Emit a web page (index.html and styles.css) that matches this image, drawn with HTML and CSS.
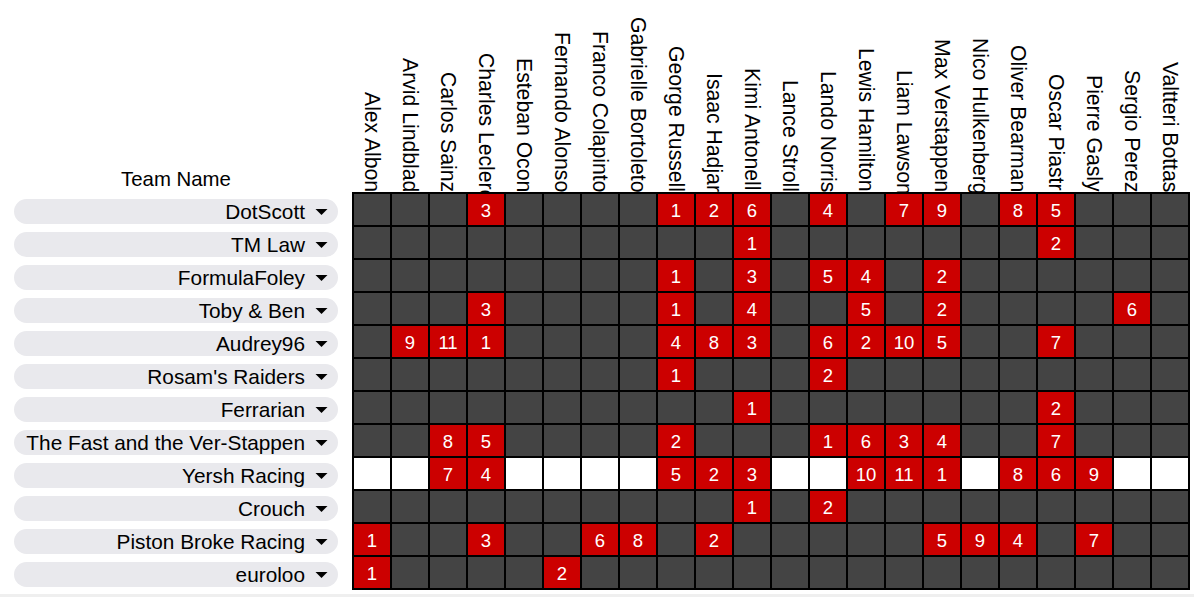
FILE: index.html
```html
<!DOCTYPE html>
<html lang="en">
<head>
<meta charset="utf-8">
<title>Team picks</title>
<link rel="stylesheet" href="styles.css">
</head>
<body>
<div class="page">
  <div class="side">
    <div class="side-head"><span>Team Name</span></div>
    <div class="teams">
      <div class="team"><span class="name">DotScott</span><svg class="caret" viewBox="0 0 12 6"><path d="M0 0H12L6 6Z"/></svg></div>
      <div class="team"><span class="name">TM Law</span><svg class="caret" viewBox="0 0 12 6"><path d="M0 0H12L6 6Z"/></svg></div>
      <div class="team"><span class="name">FormulaFoley</span><svg class="caret" viewBox="0 0 12 6"><path d="M0 0H12L6 6Z"/></svg></div>
      <div class="team"><span class="name">Toby &amp; Ben</span><svg class="caret" viewBox="0 0 12 6"><path d="M0 0H12L6 6Z"/></svg></div>
      <div class="team"><span class="name">Audrey96</span><svg class="caret" viewBox="0 0 12 6"><path d="M0 0H12L6 6Z"/></svg></div>
      <div class="team"><span class="name">Rosam's Raiders</span><svg class="caret" viewBox="0 0 12 6"><path d="M0 0H12L6 6Z"/></svg></div>
      <div class="team"><span class="name">Ferrarian</span><svg class="caret" viewBox="0 0 12 6"><path d="M0 0H12L6 6Z"/></svg></div>
      <div class="team"><span class="name">The Fast and the Ver-Stappen</span><svg class="caret" viewBox="0 0 12 6"><path d="M0 0H12L6 6Z"/></svg></div>
      <div class="team"><span class="name">Yersh Racing</span><svg class="caret" viewBox="0 0 12 6"><path d="M0 0H12L6 6Z"/></svg></div>
      <div class="team"><span class="name">Crouch</span><svg class="caret" viewBox="0 0 12 6"><path d="M0 0H12L6 6Z"/></svg></div>
      <div class="team"><span class="name">Piston Broke Racing</span><svg class="caret" viewBox="0 0 12 6"><path d="M0 0H12L6 6Z"/></svg></div>
      <div class="team"><span class="name">euroloo</span><svg class="caret" viewBox="0 0 12 6"><path d="M0 0H12L6 6Z"/></svg></div>
    </div>
  </div>
  <div class="board">
    <div class="heads">
      <div class="head"><span class="label">Alex Albon</span></div>
      <div class="head"><span class="label">Arvid Lindblad</span></div>
      <div class="head"><span class="label">Carlos Sainz</span></div>
      <div class="head"><span class="label sunk">Charles Leclerc</span></div>
      <div class="head"><span class="label">Esteban Ocon</span></div>
      <div class="head"><span class="label">Fernando Alonso</span></div>
      <div class="head"><span class="label">Franco Colapinto</span></div>
      <div class="head"><span class="label">Gabrielle Bortoleto</span></div>
      <div class="head"><span class="label">George Russell</span></div>
      <div class="head"><span class="label">Isaac Hadjar</span></div>
      <div class="head"><span class="label dip">Kimi Antonelli</span></div>
      <div class="head"><span class="label">Lance Stroll</span></div>
      <div class="head"><span class="label">Lando Norris</span></div>
      <div class="head"><span class="label">Lewis Hamilton</span></div>
      <div class="head"><span class="label dip">Liam Lawson</span></div>
      <div class="head"><span class="label">Max Verstappen</span></div>
      <div class="head"><span class="label dip">Nico Hulkenberg</span></div>
      <div class="head"><span class="label">Oliver Bearman</span></div>
      <div class="head"><span class="label dip">Oscar Piastri</span></div>
      <div class="head"><span class="label">Pierre Gasly</span></div>
      <div class="head"><span class="label">Sergio Perez</span></div>
      <div class="head"><span class="label">Valtteri Bottas</span></div>
    </div>
    <div class="grid">
      <!-- DotScott -->
      <span class="c"></span><span class="c"></span><span class="c"></span><span class="c hit">3</span><span class="c"></span><span class="c"></span><span class="c"></span><span class="c"></span><span class="c hit">1</span><span class="c hit">2</span><span class="c hit">6</span><span class="c"></span><span class="c hit">4</span><span class="c"></span><span class="c hit">7</span><span class="c hit">9</span><span class="c"></span><span class="c hit">8</span><span class="c hit">5</span><span class="c"></span><span class="c"></span><span class="c"></span>
      <!-- TM Law -->
      <span class="c"></span><span class="c"></span><span class="c"></span><span class="c"></span><span class="c"></span><span class="c"></span><span class="c"></span><span class="c"></span><span class="c"></span><span class="c"></span><span class="c hit">1</span><span class="c"></span><span class="c"></span><span class="c"></span><span class="c"></span><span class="c"></span><span class="c"></span><span class="c"></span><span class="c hit">2</span><span class="c"></span><span class="c"></span><span class="c"></span>
      <!-- FormulaFoley -->
      <span class="c"></span><span class="c"></span><span class="c"></span><span class="c"></span><span class="c"></span><span class="c"></span><span class="c"></span><span class="c"></span><span class="c hit">1</span><span class="c"></span><span class="c hit">3</span><span class="c"></span><span class="c hit">5</span><span class="c hit">4</span><span class="c"></span><span class="c hit">2</span><span class="c"></span><span class="c"></span><span class="c"></span><span class="c"></span><span class="c"></span><span class="c"></span>
      <!-- Toby & Ben -->
      <span class="c"></span><span class="c"></span><span class="c"></span><span class="c hit">3</span><span class="c"></span><span class="c"></span><span class="c"></span><span class="c"></span><span class="c hit">1</span><span class="c"></span><span class="c hit">4</span><span class="c"></span><span class="c"></span><span class="c hit">5</span><span class="c"></span><span class="c hit">2</span><span class="c"></span><span class="c"></span><span class="c"></span><span class="c"></span><span class="c hit">6</span><span class="c"></span>
      <!-- Audrey96 -->
      <span class="c"></span><span class="c hit">9</span><span class="c hit">11</span><span class="c hit">1</span><span class="c"></span><span class="c"></span><span class="c"></span><span class="c"></span><span class="c hit">4</span><span class="c hit">8</span><span class="c hit">3</span><span class="c"></span><span class="c hit">6</span><span class="c hit">2</span><span class="c hit">10</span><span class="c hit">5</span><span class="c"></span><span class="c"></span><span class="c hit">7</span><span class="c"></span><span class="c"></span><span class="c"></span>
      <!-- Rosam's Raiders -->
      <span class="c"></span><span class="c"></span><span class="c"></span><span class="c"></span><span class="c"></span><span class="c"></span><span class="c"></span><span class="c"></span><span class="c hit">1</span><span class="c"></span><span class="c"></span><span class="c"></span><span class="c hit">2</span><span class="c"></span><span class="c"></span><span class="c"></span><span class="c"></span><span class="c"></span><span class="c"></span><span class="c"></span><span class="c"></span><span class="c"></span>
      <!-- Ferrarian -->
      <span class="c"></span><span class="c"></span><span class="c"></span><span class="c"></span><span class="c"></span><span class="c"></span><span class="c"></span><span class="c"></span><span class="c"></span><span class="c"></span><span class="c hit">1</span><span class="c"></span><span class="c"></span><span class="c"></span><span class="c"></span><span class="c"></span><span class="c"></span><span class="c"></span><span class="c hit">2</span><span class="c"></span><span class="c"></span><span class="c"></span>
      <!-- The Fast and the Ver-Stappen -->
      <span class="c"></span><span class="c"></span><span class="c hit">8</span><span class="c hit">5</span><span class="c"></span><span class="c"></span><span class="c"></span><span class="c"></span><span class="c hit">2</span><span class="c"></span><span class="c"></span><span class="c"></span><span class="c hit">1</span><span class="c hit">6</span><span class="c hit">3</span><span class="c hit">4</span><span class="c"></span><span class="c"></span><span class="c hit">7</span><span class="c"></span><span class="c"></span><span class="c"></span>
      <!-- Yersh Racing -->
      <span class="c blank"></span><span class="c blank"></span><span class="c hit">7</span><span class="c hit">4</span><span class="c blank"></span><span class="c blank"></span><span class="c blank"></span><span class="c blank"></span><span class="c hit">5</span><span class="c hit">2</span><span class="c hit">3</span><span class="c blank"></span><span class="c blank"></span><span class="c hit">10</span><span class="c hit">11</span><span class="c hit">1</span><span class="c blank"></span><span class="c hit">8</span><span class="c hit">6</span><span class="c hit">9</span><span class="c blank"></span><span class="c blank"></span>
      <!-- Crouch -->
      <span class="c"></span><span class="c"></span><span class="c"></span><span class="c"></span><span class="c"></span><span class="c"></span><span class="c"></span><span class="c"></span><span class="c"></span><span class="c"></span><span class="c hit">1</span><span class="c"></span><span class="c hit">2</span><span class="c"></span><span class="c"></span><span class="c"></span><span class="c"></span><span class="c"></span><span class="c"></span><span class="c"></span><span class="c"></span><span class="c"></span>
      <!-- Piston Broke Racing -->
      <span class="c hit">1</span><span class="c"></span><span class="c"></span><span class="c hit">3</span><span class="c"></span><span class="c"></span><span class="c hit">6</span><span class="c hit">8</span><span class="c"></span><span class="c hit">2</span><span class="c"></span><span class="c"></span><span class="c"></span><span class="c"></span><span class="c"></span><span class="c hit">5</span><span class="c hit">9</span><span class="c hit">4</span><span class="c"></span><span class="c hit">7</span><span class="c"></span><span class="c"></span>
      <!-- euroloo -->
      <span class="c hit">1</span><span class="c"></span><span class="c"></span><span class="c"></span><span class="c"></span><span class="c hit">2</span><span class="c"></span><span class="c"></span><span class="c"></span><span class="c"></span><span class="c"></span><span class="c"></span><span class="c"></span><span class="c"></span><span class="c"></span><span class="c"></span><span class="c"></span><span class="c"></span><span class="c"></span><span class="c"></span><span class="c"></span><span class="c"></span>
    </div>
  </div>
</div>
<div class="track"></div>
</body>
</html>
```

FILE: styles.css
```css
html, body {
  margin: 0;
  padding: 0;
  background: #ffffff;
}

body {
  height: 597px;
  overflow: hidden;
  font-family: "Liberation Sans", Arial, sans-serif;
  color: #000000;
}

.page {
  display: flex;
  gap: 14px;
  padding-left: 14px;
}

.side {
  width: 324px;
  display: flex;
  flex-direction: column;
}

.side-head {
  height: 192px;
  box-sizing: border-box;
  padding-bottom: 1px;
  display: flex;
  align-items: flex-end;
  justify-content: center;
  font-size: 20.4px;
  line-height: 24px;
}

.teams {
  display: grid;
  grid-template-rows: repeat(12, 31px);
  row-gap: 2px;
  padding-top: 2px;
}

.team {
  align-self: end;
  height: 25px;
  margin-bottom: 1px;
  border-radius: 13px;
  background: #e9e9ed;
  display: flex;
  align-items: center;
  justify-content: flex-end;
  padding-right: 10px;
  font-size: 20.8px;
  line-height: 25px;
  white-space: nowrap;
}

.caret {
  width: 13px;
  height: 6px;
  margin-left: 10px;
  fill: #000000;
  flex: none;
}

.board {
  display: flex;
  flex-direction: column;
}

.heads {
  height: 192px;
  display: grid;
  grid-template-columns: repeat(22, 36px);
  column-gap: 2px;
  padding: 0 2px;
  overflow: hidden;
}

.head {
  display: flex;
  justify-content: center;
  align-items: flex-end;
}

.label {
  writing-mode: vertical-rl;
  white-space: nowrap;
  font-size: 21.2px;
  line-height: 24px;
}

.label.sunk {
  margin-bottom: -8px;
}

.label.dip {
  margin-bottom: -3px;
}

.grid {
  display: grid;
  grid-template-columns: repeat(22, 36px);
  grid-auto-rows: 31px;
  gap: 2px;
  padding: 2px;
  background: #000000;
  width: max-content;
}

.c {
  background: #444444;
  color: #ffffff;
  display: flex;
  align-items: center;
  justify-content: center;
  font-size: 18.5px;
  padding-top: 2px;
  box-sizing: border-box;
}

.c.hit {
  background: #cc0000;
}

.c.blank {
  background: #ffffff;
}

.track {
  margin-top: 4px;
  height: 6px;
  background: #efefef;
}
```
